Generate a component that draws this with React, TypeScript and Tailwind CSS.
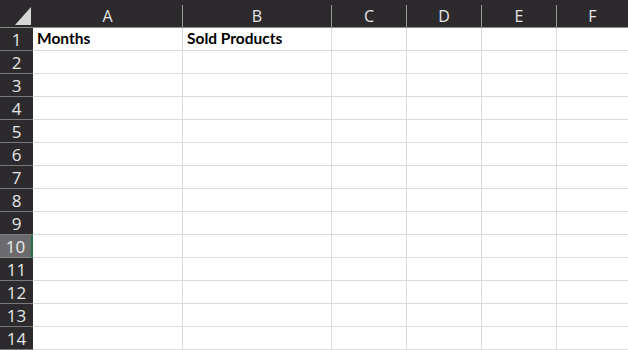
import React from "react";

const cols = [
  { name: "A", w: "w-[150px]" },
  { name: "B", w: "w-[149px]" },
  { name: "C", w: "w-[75px]" },
  { name: "D", w: "w-[75px]" },
  { name: "E", w: "w-[75px]" },
  { name: "F", w: "w-[72px]" },
];

const rows = Array.from({ length: 14 }, (_, i) => i + 1);

export default function App() {
  return (
    <div className="w-[628px] h-[350px] overflow-hidden bg-white font-['Open_Sans',sans-serif]">
      {/* column header strip */}
      <div className="flex h-[28px] bg-[#2c2a2d] border-b border-[#8a8a8a]">
        <div className="relative w-[33px] shrink-0">
          <svg className="absolute left-[15px] top-[7px]" width="16" height="18" viewBox="0 0 16 18">
            <polygon points="16,0 16,18 0,18" fill="#d6d6d6" />
          </svg>
        </div>
        {cols.map((c) => (
          <div key={c.name} className={`${c.w} shrink-0 flex items-end`}>
            <div className="flex-1 h-[22px] flex items-center justify-center text-[16px] text-[#e6e6e6] leading-none">
              {c.name}
            </div>
            <div className="w-px h-[22px] bg-[#9a9a9a]" />
          </div>
        ))}
      </div>

      {rows.map((r) => (
        <div key={r} className="flex h-[23px]">
          <div
            className={
              r === 10
                ? "w-[33px] shrink-0 flex items-center justify-center bg-[#6b6a6c] border-b border-[#8a8a8a] border-r-2 border-r-[#217346] text-[17px] text-[#ededed] leading-none"
                : "w-[33px] shrink-0 flex items-center justify-center bg-[#2c2a2d] border-b border-[#7a797b] text-[17px] text-[#e6e6e6] leading-none"
            }
          >
            {r}
          </div>
          {cols.map((c) => (
            <div
              key={c.name}
              className={`${c.w} shrink-0 border-r border-b border-[#dadada] flex items-center pl-[4px] font-['Lato',sans-serif] font-bold text-[15.5px] text-black leading-none`}
            >
              {r === 1 && c.name === "A" ? "Months" : null}
              {r === 1 && c.name === "B" ? "Sold Products" : null}
            </div>
          ))}
        </div>
      ))}
    </div>
  );
}
